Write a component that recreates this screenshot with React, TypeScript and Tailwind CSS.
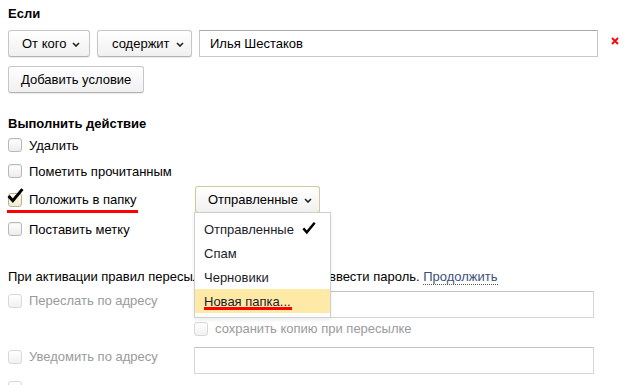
import React from 'react';

const Chevron: React.FC = () => (
  <svg width="8" height="5" viewBox="0 0 8 5" className="ml-[6px] mt-[2px]">
    <polyline points="1,1 4,4 7,1" fill="none" stroke="#222" strokeWidth="1.6" />
  </svg>
);

const Check: React.FC<{ size?: number }> = ({ size = 16 }) => (
  <svg width={size} height={size} viewBox="0 0 16 16">
    <path d="M1.5 8.5 L5.5 13 L14.5 2" fill="none" stroke="#000" strokeWidth="2.8" strokeLinejoin="miter" />
  </svg>
);

interface BoxProps {
  checked?: boolean;
  disabled?: boolean;
}

const Box: React.FC<BoxProps> = ({ checked, disabled }) => (
  <span className="relative inline-block w-[14px] h-[14px] shrink-0">
    <span
      className={
        disabled
          ? 'absolute inset-0 rounded-[3px] border border-[#d8d8d8] bg-gradient-to-b from-white to-[#f1f1f1]'
          : checked
          ? 'absolute inset-0 rounded-[3px] border border-[#b9b29a] bg-gradient-to-b from-[#fffbe9] to-[#f3ead0]'
          : 'absolute inset-0 rounded-[3px] border border-[#b8b8b8] bg-gradient-to-b from-white to-[#ececec] shadow-[inset_0_1px_1px_rgba(0,0,0,0.06)]'
      }
    />
    {checked && (
      <span className="absolute left-[-1px] top-[-6px]">
        <Check size={17} />
      </span>
    )}
  </span>
);

const Button: React.FC<{ className?: string; children: React.ReactNode }> = ({ className = '', children }) => (
  <div
    className={`flex items-center h-[27px] rounded-[3px] border border-[#c6c6c6] border-b-[#b2b2b2] bg-gradient-to-b from-white to-[#f0f0f0] shadow-[0_1px_1px_rgba(0,0,0,0.08)] text-black ${className}`}
  >
    {children}
  </div>
);

const Row: React.FC<{ h: string; label: string; checked?: boolean }> = ({ h, label, checked }) => (
  <div className={`flex items-center ${h}`}>
    <Box checked={checked} />
    <span className="ml-[7px]">{label}</span>
  </div>
);

export default function App() {
  const folders = ['Отправленные', 'Спам', 'Черновики'];

  return (
    <div
      className="relative w-[626px] h-[385px] overflow-hidden bg-white text-[13px] leading-[15px] text-black"
      style={{ fontFamily: '"Liberation Sans", Arial, sans-serif' }}
    >
      <div className="pl-2">
        <div className="pt-[6px] font-bold">Если</div>

        <div className="mt-[9px] flex items-center">
          <Button className="w-[82px] pl-[13px]">
            От кого
            <Chevron />
          </Button>
          <Button className="ml-[7px] w-[95px] pl-[14px]">
            содержит
            <Chevron />
          </Button>
          <div className="ml-[7px] flex items-center w-[399px] h-[27px] border border-[#c8c8c8] border-t-[#a9a9a9] pl-[10px]">
            Илья Шестаков
          </div>
          <svg width="8" height="8" viewBox="0 0 8 8" className="ml-[13px] mt-[-5px]">
            <path d="M1 1 L7 7 M7 1 L1 7" stroke="#ff0000" strokeWidth="1.8" />
          </svg>
        </div>

        <Button className="mt-[9px] w-[136px] pl-[12px]">Добавить условие</Button>

        <div className="mt-[23px] font-bold">Выполнить действие</div>

        <Row h="h-[26px] mt-[1px]" label="Удалить" />
        <Row h="h-[26px]" label="Пометить прочитанным" />

        <div className="flex items-center h-[31px]">
          <Box checked />
          <span className="relative ml-[7px] w-[166px]">
            Положить в папку
            <span className="absolute left-[-22px] top-[18px] w-[131px] h-[3px] bg-[#ff0000]" />
          </span>
          <div className="relative">
            <Button className="w-[125px] h-[26px] pl-[12px] border-[#d2c89a] shadow-[0_0_3px_1px_rgba(255,214,60,0.55)]">
              Отправленные
              <Chevron />
            </Button>
            <div className="absolute left-[-1px] top-[26px] z-10 w-[137px] border border-[#cfcfcf] bg-white py-[4px] shadow-[0_2px_4px_rgba(0,0,0,0.08)]">
              {folders.map((f, i) => (
                <div key={f} className="flex items-center h-[24px] pl-[9px] text-[#1c1c2a]">
                  {f}
                  {i === 0 && (
                    <span className="ml-[8px] mt-[-2px]">
                      <Check size={14} />
                    </span>
                  )}
                </div>
              ))}
              <div className="relative flex items-center h-[24px] pl-[9px] bg-[#fee9a6] text-[#1c1c2a]">
                Новая папка...
                <span className="absolute left-[9px] top-[18px] w-[88px] h-[3px] bg-[#ff0000]" />
              </div>
            </div>
          </div>
        </div>

        <Row h="h-[28px]" label="Поставить метку" />

        <div className="mt-[26px]">
          При активации правил пересылки вам потребуется{' '}
          <span className="ml-[8px]">ввести пароль.</span>{' '}
          <span className="text-[#3d4f7c] border-b border-dotted border-[#555]">Продолжить</span>
        </div>

        <div className="mt-[7px] flex items-start">
          <div className="w-[186px] pt-[2px] flex items-center text-[#9a9a9a]">
            <Box disabled />
            <span className="ml-[7px]">Переслать по адресу</span>
          </div>
          <div className="w-[400px] h-[27px] border border-[#d6d6d6] border-t-[#c4c4c4]" />
        </div>

        <div className="mt-[3px] ml-[186px] flex items-center text-[#9a9a9a]">
          <Box disabled />
          <span className="ml-[7px]">сохранить копию при пересылке</span>
        </div>

        <div className="mt-[11px] flex items-start">
          <div className="w-[186px] pt-[2px] flex items-center text-[#9a9a9a]">
            <Box disabled />
            <span className="ml-[7px]">Уведомить по адресу</span>
          </div>
          <div className="w-[400px] h-[27px] border border-[#d6d6d6] border-t-[#c4c4c4]" />
        </div>

        <div className="mt-[7px] flex items-center text-[#9a9a9a]">
          <Box disabled />
        </div>
      </div>
    </div>
  );
}
